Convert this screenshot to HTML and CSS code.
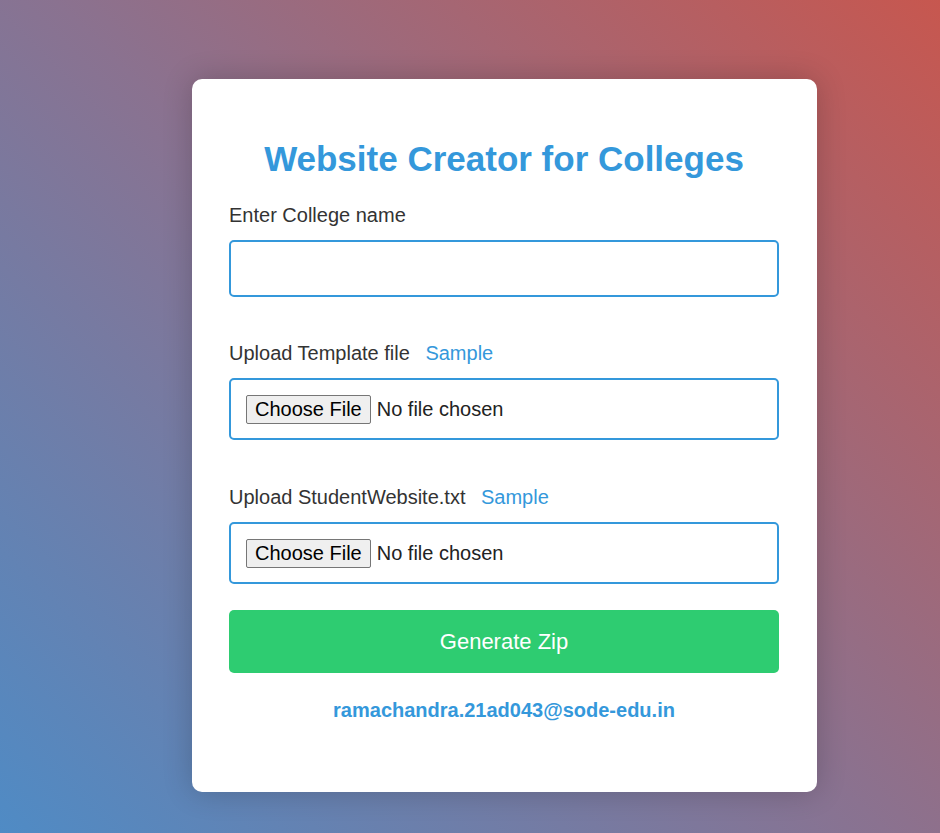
FILE: index.html
```html
<!DOCTYPE html>
<html lang="en">
<head>
<meta charset="utf-8">
<title>Website Creator for Colleges</title>
<link rel="stylesheet" href="styles.css">
</head>
<body>
  <main class="card">
    <h1 class="title">Website Creator for Colleges</h1>
    <div class="field field-name">
      <label class="label" for="college">Enter College name</label>
      <input class="text-input" type="text" id="college">
    </div>
    <div class="field field-template">
      <label class="label" for="template">Upload Template file <a class="sample" href="#">Sample</a></label>
      <input class="file-input" type="file" id="template">
    </div>
    <div class="field field-students">
      <label class="label" for="students">Upload StudentWebsite.txt <a class="sample" href="#">Sample</a></label>
      <input class="file-input" type="file" id="students">
    </div>
    <button class="generate" type="button">Generate Zip</button>
    <p class="email">ramachandra.21ad043@sode-edu.in</p>
  </main>
</body>
</html>
```

FILE: styles.css
```css
html, body {
  margin: 0;
  padding: 0;
}

body {
  min-height: 833px;
  background: linear-gradient(45deg, #4f8bc5 0%, #8a7290 50%, #c7574f 100%);
  font-family: "Liberation Sans", Arial, sans-serif;
  overflow: hidden;
}

.card {
  box-sizing: border-box;
  width: 625px;
  margin: 79px 0 0 192px;
  padding: 40px 38px 70px 37px;
  background: #ffffff;
  border-radius: 10px;
  box-shadow: 0 0 30px rgba(0, 0, 0, 0.2);
}

.title {
  margin: 20px 0 25px;
  font-size: 35px;
  line-height: 40px;
  font-weight: bold;
  color: #3498db;
  text-align: center;
}

.field-name {
  margin-bottom: 45px;
}

.field-template {
  margin-bottom: 46px;
}

.field-students {
  margin-bottom: 26px;
}

.label {
  display: block;
  font-size: 20px;
  line-height: 23px;
  color: #333333;
  margin-bottom: 13px;
}

.sample {
  color: #3498db;
  text-decoration: none;
  margin-left: 10px;
}

.text-input {
  display: block;
  box-sizing: border-box;
  width: 100%;
  height: 57px;
  margin: 0;
  padding: 10px 15px;
  border: 2px solid #3498db;
  border-radius: 5px;
  font-size: 18px;
  font-family: "Liberation Sans", Arial, sans-serif;
  outline: none;
}

.file-input {
  display: block;
  box-sizing: border-box;
  width: 100%;
  height: 62px;
  margin: 0;
  padding: 15px 15px;
  border: 2px solid #3498db;
  border-radius: 5px;
  font-size: 20px;
  font-family: "Liberation Sans", Arial, sans-serif;
  color: #222222;
  background: #ffffff;
}

.file-input::file-selector-button {
  font-size: 20px;
  font-family: "Liberation Sans", Arial, sans-serif;
  color: #000000;
  background: #efefef;
  border: 1px solid #767676;
  border-radius: 2px;
  padding: 1px 8px;
  height: 29px;
  margin-right: 6px;
}

.generate {
  display: block;
  width: 100%;
  height: 63px;
  margin: 0;
  border: none;
  border-radius: 5px;
  background: #2ecc71;
  color: #ffffff;
  font-size: 22px;
  font-family: "Liberation Sans", Arial, sans-serif;
  cursor: pointer;
}

.email {
  margin: 26px 0 0;
  text-align: center;
  font-size: 20px;
  line-height: 23px;
  font-weight: bold;
  color: #3498db;
}
```
